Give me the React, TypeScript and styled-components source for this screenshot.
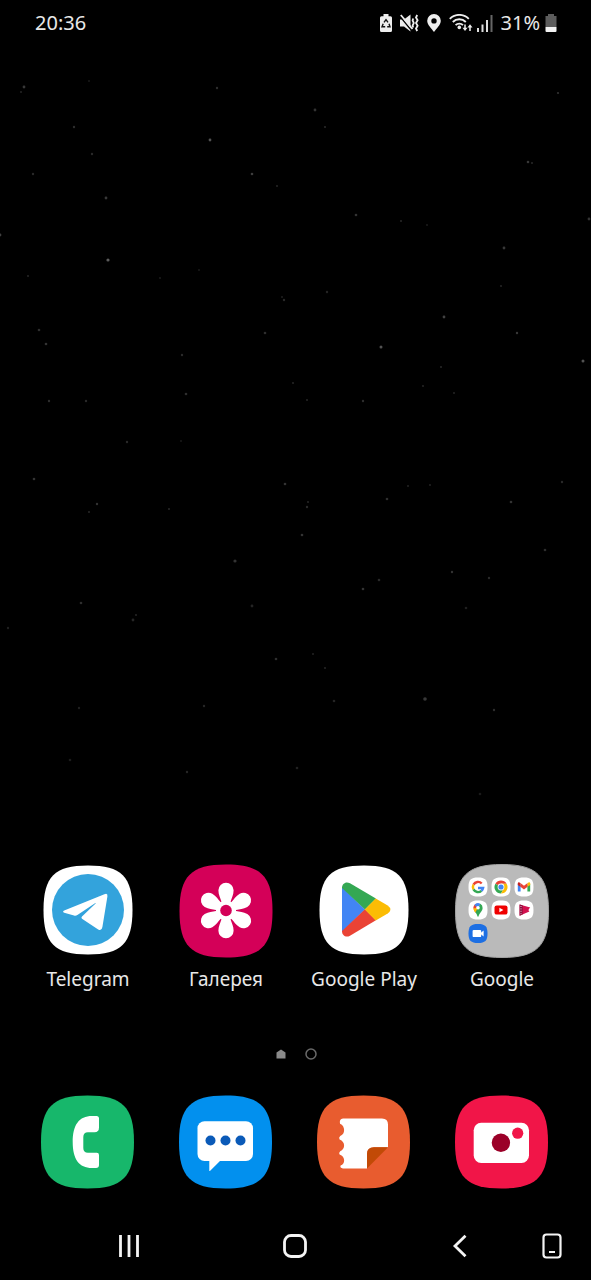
import React from "react";
import styled, { createGlobalStyle } from "styled-components";

const GlobalStyle = createGlobalStyle`
  *, *::before, *::after { box-sizing: border-box; }
  body { margin: 0; background: #000; }
  button { margin: 0; padding: 0; border: 0; background: none; color: inherit; font: inherit; cursor: pointer; }
  svg { display: block; flex: none; }
`;

const Screen = styled.div`
  position: relative;
  display: flex;
  flex-direction: column;
  min-height: 100vh;
  overflow: hidden;
  background: #000;
  color: #e8e8e8;
  font-family: "Noto Sans", Roboto, sans-serif;
  font-size: 20px;
  line-height: 28px;
`;

const Wallpaper = styled.svg`
  position: absolute;
  inset: 0;
  width: 100%;
  height: 100%;
  pointer-events: none;
`;

const StatusBar = styled.header`
  position: relative;
  display: flex;
  align-items: center;
  justify-content: space-between;
  height: 46px;
  padding: 0 34px 0 35px;
`;

const StatusGroup = styled.div<{ $gap: number }>`
  display: flex;
  align-items: center;
  gap: ${(p) => p.$gap}px;
`;

const Home = styled.main`
  position: relative;
  flex: 1;
  display: flex;
  flex-direction: column;
  justify-content: flex-end;
`;

const AppGrid = styled.section`
  display: grid;
  grid-template-columns: repeat(4, 1fr);
  padding: 0 20px 0 19px;
`;

const Dock = styled(AppGrid)`
  padding: 0 21px 0 18px;
`;

const AppButton = styled.button`
  display: flex;
  flex-direction: column;
  align-items: center;
`;

const AppLabel = styled.span`
  margin-top: 7px;
  font-size: 19px;
  white-space: nowrap;
`;

const PageDots = styled.nav`
  display: flex;
  justify-content: center;
  gap: 18px;
  padding: 55px 0 35px;
`;

const PageDot = styled.button`
  display: grid;
  place-items: center;
  width: 12px;
  height: 12px;
`;

const NavBar = styled.nav`
  position: relative;
  display: flex;
  align-items: center;
  height: 68px;
  margin-top: 23px;
  padding: 0 15px 0 105px;
`;

const NavMain = styled.div`
  flex: 1;
  display: flex;
  justify-content: space-between;
  margin-right: 44px;
`;

const NavButton = styled.button`
  display: grid;
  place-items: center;
  width: 48px;
  height: 48px;
`;

// x, y, radius, brightness
const stars: [number, number, number, number][] = [
  [24, 87, 1.4, 0.22], [21, 92, 1, 0.14], [89, 81, 1, 0.1], [217, 88, 1.2, 0.18], [558, 93, 1.1, 0.2],
  [315, 110, 1.4, 0.2], [325, 127, 1.1, 0.16], [74, 127, 1.2, 0.18], [210, 140, 1.4, 0.32], [92, 154, 1.2, 0.16],
  [33, 174, 1.2, 0.16], [252, 174, 1.3, 0.24], [277, 186, 1.1, 0.14], [528, 162, 1.3, 0.22], [532, 163, 1.1, 0.15],
  [106, 198, 1.4, 0.22], [356, 215, 1.3, 0.2], [401, 221, 1.1, 0.15], [427, 225, 1.1, 0.1], [0, 235, 1.4, 0.25],
  [589, 219, 1.4, 0.2], [504, 248, 1.4, 0.22], [108, 260, 1.6, 0.36], [28, 276, 1.1, 0.14], [199, 270, 1, 0.1],
  [160, 278, 1.1, 0.1], [284, 300, 1.2, 0.16], [282, 297, 1, 0.12], [327, 292, 1.2, 0.14], [501, 286, 1.1, 0.14],
  [444, 317, 1.4, 0.26], [39, 330, 1.3, 0.18], [46, 344, 1.3, 0.2], [265, 333, 1.3, 0.18], [517, 333, 1.2, 0.22],
  [381, 347, 1.5, 0.32], [182, 355, 1.2, 0.17], [583, 361, 1.5, 0.32], [441, 367, 1.1, 0.15], [293, 383, 1.1, 0.14],
  [186, 394, 1.3, 0.18], [423, 386, 1.1, 0.14], [454, 393, 1, 0.14], [49, 401, 1.2, 0.18], [86, 401, 1.2, 0.16],
  [307, 400, 1.1, 0.14], [363, 401, 1.2, 0.18], [127, 442, 1.2, 0.16], [181, 441, 1, 0.1], [34, 479, 1.3, 0.2],
  [285, 484, 1.3, 0.2], [562, 482, 1.2, 0.16], [97, 504, 1.2, 0.2], [89, 512, 1.1, 0.15], [169, 509, 1.1, 0.15],
  [308, 502, 1.1, 0.14], [307, 507, 1.2, 0.16], [387, 499, 1.3, 0.18], [408, 486, 1.1, 0.13], [430, 485, 1.1, 0.13],
  [511, 502, 1.3, 0.2], [302, 535, 1.3, 0.2], [545, 550, 1.3, 0.18], [235, 561, 1.6, 0.2], [452, 572, 1.2, 0.2],
  [379, 580, 1.3, 0.16], [489, 578, 1.2, 0.16], [363, 589, 1.3, 0.2], [81, 603, 1.3, 0.18], [252, 606, 1.4, 0.14],
  [136, 615, 1.1, 0.14], [133, 620, 1.4, 0.15], [466, 608, 1.3, 0.12], [8, 628, 1.2, 0.12], [276, 659, 1.3, 0.18],
  [313, 654, 1.1, 0.13], [325, 668, 1.1, 0.14], [334, 701, 1.3, 0.14], [425, 699, 1.8, 0.22], [494, 710, 1.2, 0.18],
  [204, 706, 1.2, 0.15], [79, 708, 1.2, 0.12], [70, 760, 1.3, 0.11], [187, 772, 1.2, 0.15], [297, 768, 1.3, 0.13],
  [480, 794, 1.3, 0.1],
];

/** The rounded tile behind every icon, centred on (cx, cy). */
function Tile({ cx = 47, cy = 47, size = 93, fill, stroke }: { cx?: number; cy?: number; size?: number; fill: string; stroke?: string }) {
  const r = size / 2;
  const q = r * 0.75;
  return (
    <path
      transform={`translate(${cx} ${cy})`}
      d={`M0 ${-r}C${q} ${-r} ${r} ${-q} ${r} 0C${r} ${q} ${q} ${r} 0 ${r}C${-q} ${r} ${-r} ${q} ${-r} 0C${-r} ${-q} ${-q} ${-r} 0 ${-r}Z`}
      fill={fill}
      stroke={stroke}
    />
  );
}

function IconArt({ children }: { children: React.ReactNode }) {
  return <svg width="94" height="94" viewBox="0 0 94 94" aria-hidden="true">{children}</svg>;
}

const TelegramIcon = () => (
  <IconArt>
    <Tile cy={46} size={89} fill="#fff" />
    <circle cx="47" cy="46" r="36" fill="#33a3dc" />
    <path
      d="M23.2 46.4 63.4 30.2Q67 28.800 66.4 32.4L61.4 63Q60.6 67.4 57.2 65.4L41 54.800Q39.8 53.8 41 52.6L54.6 39.6Q55.2 38.6 54 39.2L36.400 51Q34.8 52.2 33 51.6L23.2 48.800Q21 47.600 23.2 46.4Z"
      fill="#fff"
    />
  </IconArt>
);

const GalleryIcon = () => (
  <IconArt>
    <Tile fill="#d40058" />
    <g transform="translate(47 46.5)" fill="#fff">
      {[0, 60, 120, 180, 240, 300].map((a) => (
        <path key={a} transform={`rotate(${a})`} d="M-4 0L-4.6-9C-5.6-12.5-7.6-15.5-7.6-20.2A7.6 7.6 0 0 1 7.6-20.2C7.6-15.5 5.6-12.5 4.6-9L4 0Z" />
      ))}
      <circle r="10" />
      <circle r="5.8" fill="#d40058" />
    </g>
  </IconArt>
);

const PlayIcon = () => (
  <IconArt>
    <Tile cy={46} size={89} fill="#fff" />
    <path d="M25 23V68L48 45.4Z" fill="#4285f4" />
    <path d="M25 24C25 19.5 29 17 33 19.3L58.9 34.6 48 45.6 25 24Z" fill="#34a853" />
    <path d="M25 67C25 71.5 29 74 33 71.7L58.9 56.2 48 45.2 25 67Z" fill="#ea4335" />
    <path d="M58.7 34.5 70.7 41.4Q76 45.4 70.7 49.4L58.7 56.4 47.8 45.4Z" fill="#fbbc04" />
  </IconArt>
);

const FolderIcon = () => (
  <IconArt>
    <Tile fill="#bababa" stroke="#a2a2a2" />
    {/* Google */}
    <g transform="translate(23 23)">
      <Tile cx={0} cy={0} size={19} fill="#fff" />
      <g fill="none" strokeWidth="2.4">
        <path d="M-4.5-2.4A5.1 5.1 0 0 1 3.7-3.5" stroke="#ea4335" />
        <path d="M-4.5 2.4A5.1 5.1 0 0 1-4.5-2.4" stroke="#fbbc04" />
        <path d="M3.4 3.8A5.1 5.1 0 0 1-4.5 2.4" stroke="#34a853" />
        <path d="M0 1H5.1A5.1 5.1 0 0 1 3.4 3.8" stroke="#4285f4" />
      </g>
    </g>
    {/* Chrome */}
    <g transform="translate(46 23)">
      <Tile cx={0} cy={0} size={19} fill="#fff" />
      <path d="M0 0-5.6-3.3A6.5 6.5 0 0 1 5.6-3.3H0Z" fill="#ea4335" />
      <path d="M0 0-5.6-3.3A6.5 6.5 0 0 0 0 6.5L2.8 1.6Z" fill="#34a853" />
      <path d="M0 0V-3.3H5.6A6.5 6.5 0 0 1 0 6.5L2.8 1.6Z" fill="#fbbc04" />
      <circle r="3.4" fill="#fff" />
      <circle r="2.6" fill="#4285f4" />
    </g>
    {/* Gmail */}
    <g transform="translate(69 23)">
      <Tile cx={0} cy={0} size={19} fill="#fff" />
      <path d="M-6.2-3V4.6H-3.4V-2Z" fill="#4285f4" />
      <path d="M6.2-3V4.6H3.4V-2Z" fill="#34a853" />
      <path d="M-3.6-4 0-1.2 3.6-4V-.2L0 2.6-3.6-.2Z" fill="#ea4335" />
      <path d="M-6.2-3.4Q-6-5.6-3.6-4V-.2L-6.2-2Z" fill="#c5221f" />
      <path d="M6.2-3.4Q6-5.6 3.6-4V-.2L6.2-2Z" fill="#fbbc04" />
    </g>
    {/* Maps */}
    <g transform="translate(23 46)">
      <Tile cx={0} cy={0} size={19} fill="#fff" />
      <path d="M-4.6-2.4A4.7 4.7 0 0 1-1.4-6.5L1 1-2.6 2.6Q-4.6 0-4.6-2.4Z" fill="#ea4335" />
      <path d="M-3.6-5 0-2 2.6-6A4.7 4.7 0 0 0-3.6-5Z" fill="#4285f4" />
      <path d="M-4.6-1.8 0-2-2.6 2.6Q-4.4.6-4.6-1.8Z" fill="#fbbc04" />
      <path d="M2.4-6.2A4.7 4.7 0 0 1 4.6-2C4.6 1.6 1 3 .6 6.6H-.6C-.8 4.6-1.6 3.8-2.6 2.6Z" fill="#34a853" />
      <circle cy="-2.2" r="1.8" fill="#fff" />
    </g>
    {/* YouTube */}
    <g transform="translate(46 46)">
      <Tile cx={0} cy={0} size={19} fill="#fff" />
      <rect x="-6.5" y="-4.6" width="13" height="9.2" rx="2.2" fill="#f00000" />
      <path d="M-1.6-2.2 2.4 0-1.6 2.2Z" fill="#fff" />
    </g>
    {/* Play Movies */}
    <g transform="translate(69 46)">
      <Tile cx={0} cy={0} size={19} fill="#fff" />
      <path d="M-4.4-5.6 6.2-2.4Q3.4 0 5.4 1.6L-4.4 5.8Z" fill="#d3124f" />
      <path d="M-4.4-5.6-1.4-4.7V4.5L-4.4 5.8Z" fill="#8f0c3c" />
      <path d="M-3-4V4.2" stroke="#fff" strokeWidth=".8" strokeDasharray="1 1.4" />
    </g>
    {/* Duo */}
    <g transform="translate(23 69.5)">
      <Tile cx={0} cy={0} size={19} fill="#1d6fe3" />
      <rect x="-5.4" y="-3.6" width="8.6" height="7.2" rx="1.2" fill="#fff" />
      <path d="M2 0 5.6-3V3Z" fill="#fff" />
    </g>
  </IconArt>
);

const PhoneIcon = () => (
  <IconArt>
    <Tile cx={47.5} fill="#17b76b" />
    <path
      d="M52 21C39 21 32.7 30 32.7 47S39 73 52 73H56Q59 73 59 70V60Q59 57.8 56.8 57.8H48Q43.3 57.8 43.3 53V42Q43.3 37.2 48 37.2H54.5Q59 37.2 59 32.5V23.5Q59 21 56.5 21Z"
      fill="#fff"
    />
  </IconArt>
);

const MessagesIcon = () => (
  <IconArt>
    <Tile cx={47.5} fill="#0290ee" />
    <rect x="19.5" y="26.3" width="55.5" height="39.7" rx="7" fill="#fff" />
    <path d="M31.3 65V75.5Q31.3 76.6 32.2 75.7L43 65Z" fill="#fff" />
    {[32.5, 47.5, 62.5].map((x) => <circle key={x} cx={x} cy="45.5" r="5" fill="#0a5ab8" />)}
  </IconArt>
);

const NotesIcon = () => (
  <IconArt>
    <Tile cx={47.5} fill="#e85c2f" />
    <path
      d="M27 23.5H66Q72 23.5 72 29.5V52.3H58Q51 52.3 51 59V73.6H27Q23.6 73 24.6 70.6C29.5 69.5 29.5 61.5 23.6 59.6Q22.4 57.8 24.2 56.2C29.5 54.5 29.5 46.5 23.6 44.6Q22.4 42.6 24.2 41C29.5 39.4 29.5 31 24 28.8Q23 24 27 23.5Z"
      fill="#fff"
    />
    <path d="M72 52.3H58Q51 52.3 51 59V73.6Z" fill="#c24a06" />
  </IconArt>
);

const CameraIcon = () => (
  <IconArt>
    <Tile cx={47.5} fill="#f11548" />
    <rect x="19.7" y="27.7" width="55.3" height="40.3" rx="7.5" fill="#fff" />
    <circle cx="46.9" cy="47.8" r="9.2" fill="#9b0028" />
    <circle cx="63.7" cy="38.2" r="5.6" fill="#f11548" />
  </IconArt>
);

const apps = [
  { name: "Telegram", Icon: TelegramIcon },
  { name: "Галерея", Icon: GalleryIcon },
  { name: "Google Play", Icon: PlayIcon },
  { name: "Google", Icon: FolderIcon },
];

const dockApps = [
  { name: "Телефон", Icon: PhoneIcon },
  { name: "Сообщения", Icon: MessagesIcon },
  { name: "Заметки", Icon: NotesIcon },
  { name: "Камера", Icon: CameraIcon },
];

const BatteryCareIcon = () => (
  <svg width="12" height="18" viewBox="0 0 12 18" aria-hidden="true">
    <path d="M3.5 0H8.5V2.3H10.5Q12 2.3 12 3.8V16.5Q12 18 10.5 18H1.5Q0 18 0 16.5V3.8Q0 2.3 1.5 2.3H3.5Z" fill="#eee" />
    <g fill="none" stroke="#111" strokeWidth="1.4">
      <path d="M4 8.4 6 5.6 8 8.4" />
      <path d="M9 9.8 10 12.8H7.2" />
      <path d="M5.2 12.8H2L3.2 9.8" />
    </g>
  </svg>
);

const VibrateIcon = () => (
  <svg width="19" height="18" viewBox="0 0 19 18" aria-hidden="true">
    <path d="M0 5.5H4L10.5.5V17.5L4 12.5H0Z" fill="#eee" />
    <path d="M0 2.4 12 17" stroke="#000" strokeWidth="1.4" />
    <path d="M.8 1 12.500 15" stroke="#eee" strokeWidth="1.8" />
    <path d="M13.2 4.500 12.6 6.500 13.8 9 12.6 11.500 13.200 13.500M17.2 1 16 3.500 17.6 6.200 16 9 17.6 11.800 16 14.500 17.200 17" fill="none" stroke="#eee" strokeWidth="1.8" />
  </svg>
);

const LocationIcon = () => (
  <svg width="14" height="18" viewBox="0 0 14 18" aria-hidden="true">
    <path d="M7 0A6.8 6.8 0 0 1 13.8 6.8C13.8 11 9.5 14.5 7 18 4.5 14.5.2 11 .2 6.8A6.8 6.8 0 0 1 7 0ZM7 4.2A2.7 2.7 0 1 0 7 9.6 2.7 2.7 0 0 0 7 4.2Z" fill="#eee" fillRule="evenodd" />
  </svg>
);

const WifiIcon = () => (
  <svg width="24" height="18" viewBox="0 0 24 18" aria-hidden="true">
    <g fill="none" stroke="#eee" strokeWidth="1.9">
      <path d="M.8 4.8A13.5 13.5 0 0 1 19.8 4.8" />
      <path d="M3.800 8A9.2 9.2 0 0 1 16.800 8" />
      <path d="M6.600 11.200A5.2 5.2 0 0 1 14 11.200" />
    </g>
    <circle cx="10.3" cy="13.4" r="1.8" fill="#eee" />
    <path d="M16 10.5V15M21 17V12.5" stroke="#eee" strokeWidth="1.5" />
    <path d="M13.5 13.8H18.5L16 17ZM18.5 13.5 21 10.3 23.5 13.5Z" fill="#eee" />
  </svg>
);

const SignalIcon = () => (
  <svg width="16" height="18" viewBox="0 0 16 18" aria-hidden="true">
    <path d="M0 14H2V18H0ZM4.500 10.5H6.5V18H4.5ZM9 6H11V18H9Z" fill="#ddd" />
    <path d="M13.5 1H15.5V18H13.5Z" fill="#666" />
  </svg>
);

const BatteryIcon = () => (
  <svg width="12" height="18" viewBox="0 0 12 18" aria-hidden="true">
    <path d="M3 0H9V2H11.5V13H.5V2H3Z" fill="#5c5c5c" />
    <path d="M.5 13H11.5V17Q11.5 18 10.5 18H1.5Q.5 18 .5 17Z" fill="#f2f2f2" />
  </svg>
);

export default function App() {
  return (
    <Screen>
      <GlobalStyle />
      <Wallpaper viewBox="0 0 591 1280" preserveAspectRatio="xMidYMin slice" aria-hidden="true">
        {stars.map(([x, y, r, o]) => (
          <circle key={`${x}-${y}`} cx={x} cy={y} r={r} fill="#fff" opacity={o} />
        ))}
      </Wallpaper>

      <StatusBar>
        <time>20:36</time>
        <StatusGroup $gap={8}>
          <StatusGroup $gap={8}>
            <BatteryCareIcon />
            <VibrateIcon />
            <LocationIcon />
            <StatusGroup $gap={4}>
              <WifiIcon />
              <SignalIcon />
            </StatusGroup>
          </StatusGroup>
          <StatusGroup $gap={5}>
            <span>31%</span>
            <BatteryIcon />
          </StatusGroup>
        </StatusGroup>
      </StatusBar>

      <Home>
        <AppGrid>
          {apps.map(({ name, Icon }) => (
            <AppButton key={name} type="button">
              <Icon />
              <AppLabel>{name}</AppLabel>
            </AppButton>
          ))}
        </AppGrid>
        <PageDots>
          <PageDot type="button" aria-label="Главный экран">
            <svg width="10" height="10" viewBox="0 0 10 10">
              <path d="M5 .5 9.5 3.5V9.5H.5V3.5Z" fill="#8a8a8a" />
            </svg>
          </PageDot>
          <PageDot type="button" aria-label="Экран 2">
            <svg width="12" height="12" viewBox="0 0 12 12">
              <circle cx="6" cy="6" r="5" fill="none" stroke="#6a6a6a" strokeWidth="1.5" />
            </svg>
          </PageDot>
        </PageDots>
        <Dock>
          {dockApps.map(({ name, Icon }) => (
            <AppButton key={name} type="button" aria-label={name}>
              <Icon />
            </AppButton>
          ))}
        </Dock>
      </Home>

      <NavBar>
        <NavMain>
          <NavButton type="button" aria-label="Последние">
            <svg width="24" height="24" viewBox="0 0 24 24">
              <path d="M3.5 1V23M12 1V23M20.5 1V23" stroke="#f4f4f4" strokeWidth="2.8" />
            </svg>
          </NavButton>
          <NavButton type="button" aria-label="Домой">
            <svg width="24" height="24" viewBox="0 0 24 24">
              <rect x="1.5" y="1.5" width="21" height="21" rx="6.5" fill="none" stroke="#f4f4f4" strokeWidth="2.8" />
            </svg>
          </NavButton>
          <NavButton type="button" aria-label="Назад">
            <svg width="24" height="24" viewBox="0 0 24 24">
              <path d="M17.5 1.8 7 12 17.5 22.2" fill="none" stroke="#f4f4f4" strokeWidth="2.8" />
            </svg>
          </NavButton>
        </NavMain>
        <NavButton type="button" aria-label="Экран">
          <svg width="20" height="26" viewBox="0 0 20 26">
            <rect x="1.5" y="1.5" width="17" height="23" rx="3" fill="none" stroke="#f4f4f4" strokeWidth="2.2" />
            <path d="M7 19H13" stroke="#f4f4f4" strokeWidth="2" />
          </svg>
        </NavButton>
      </NavBar>
    </Screen>
  );
}
